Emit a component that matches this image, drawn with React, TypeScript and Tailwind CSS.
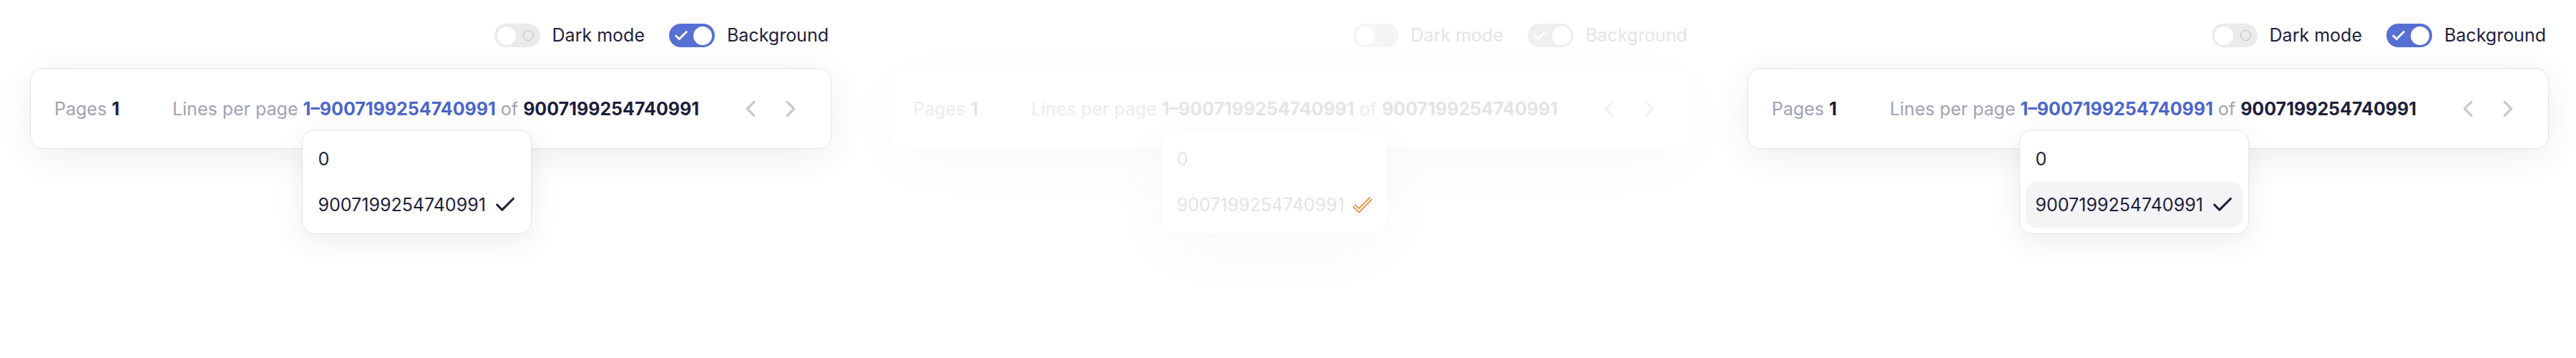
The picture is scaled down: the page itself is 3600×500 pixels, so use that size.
import { Check, ChevronLeft, ChevronRight } from "lucide-react";

type Variant = "plain" | "ghost" | "hover";

function Toggle({ on, ghost }: { on: boolean; ghost: boolean }) {
  const track = on
    ? ghost
      ? "bg-[#efefef] justify-between"
      : "bg-[#5670d4] justify-between"
    : ghost
      ? "bg-[#f5f5f5] justify-between"
      : "bg-[#ebebeb] justify-between";

  return (
    <span className={`flex h-[33px] w-[64px] items-center rounded-full px-[4px] ${track}`}>
      {on ? (
        <>
          <Check size={22} strokeWidth={3.2} className="ml-[2px] text-white" />
          <span className="h-[26px] w-[26px] rounded-full bg-white" />
        </>
      ) : (
        <>
          <span className="h-[26px] w-[26px] rounded-full bg-white" />
          <span
            className={`mr-[5px] h-[15px] w-[15px] rounded-full border-[1.5px] ${
              ghost ? "border-[#eeeeee]" : "border-[#b8b8b8]"
            }`}
          />
        </>
      )}
    </span>
  );
}

function GhostCheck() {
  return (
    <svg width="30" height="24" viewBox="0 0 30 24" fill="none" aria-hidden>
      <path d="M3 13l7 7L27 3" stroke="#e11d1d" strokeWidth="5" strokeLinejoin="miter" />
      <path d="M3 13l7 7L27 3" stroke="#f7e01a" strokeWidth="3.6" strokeLinejoin="miter" />
      <path d="M3 13l7 7L27 3" stroke="#eeeeee" strokeWidth="2" strokeLinejoin="miter" />
    </svg>
  );
}

function Panel({ variant }: { variant: Variant }) {
  const ghost = variant === "ghost";
  const dark = ghost ? "text-[#e4e4e4]" : "text-[#1d1e3b]";
  const muted = ghost ? "text-[#ececec]" : "text-[#a1a1b3]";
  const blue = ghost ? "text-[#e6e6e6]" : "text-[#4b66c9]";
  const chevron = ghost ? "text-[#f2f2f2]" : "text-[#c9c9d3]";

  return (
    <div className="flex w-[1200px] shrink-0 flex-col pl-[42px] pt-[33px]">
      <div className="flex w-[1120px] items-center justify-end gap-[34px] pr-[4px] text-[25px] leading-[33px]">
        <label className="flex items-center gap-[17px]">
          <Toggle on={false} ghost={ghost} />
          <span className={dark}>Dark mode</span>
        </label>
        <label className="flex items-center gap-[17px]">
          <Toggle on ghost={ghost} />
          <span className={dark}>Background</span>
        </label>
      </div>

      <div
        className={`mt-[29px] flex h-[113px] w-[1120px] items-center rounded-[18px] border bg-white pl-[33px] pr-[37px] text-[25px] leading-[30px] ${
          ghost
            ? "border-[#fafafa] shadow-[0_20px_90px_rgba(0,0,0,0.025)]"
            : "border-[#e4e4e4] shadow-[0_10px_50px_rgba(0,0,0,0.07)]"
        }`}
      >
        <p className={muted}>
          Pages <span className={`font-bold ${dark}`}>1</span>
        </p>
        <p className={`ml-[74px] ${muted}`}>
          Lines per page{" "}
          <span className="relative">
            <span className={`font-bold ${blue}`}>1–9007199254740991</span>
            <div
              className={`absolute left-[-2px] top-full z-10 mt-[14px] rounded-[18px] border bg-white p-2 ${
                ghost
                  ? "border-[#fafafa] shadow-[0_20px_90px_rgba(0,0,0,0.03)]"
                  : "border-[#e4e4e4] shadow-[0_10px_40px_rgba(0,0,0,0.08)]"
              }`}
            >
              <div className={`flex h-16 items-center rounded-[14px] px-[14px] font-normal ${dark}`}>0</div>
              <div
                className={`flex h-16 items-center gap-[10px] whitespace-nowrap rounded-[14px] pl-[14px] pr-[11px] font-normal ${dark} ${
                  variant === "hover" ? "bg-[#f4f4f6]" : ""
                }`}
              >
                <span>9007199254740991</span>
                {ghost ? (
                  <GhostCheck />
                ) : (
                  <Check size={34} strokeWidth={2.2} className="text-[#1d1e3b]" />
                )}
              </div>
            </div>
          </span>{" "}
          of <span className={`font-bold ${dark}`}>9007199254740991</span>
        </p>
        <div className={`ml-auto flex items-center gap-[18px] ${chevron}`}>
          <ChevronLeft size={38} strokeWidth={2.1} />
          <ChevronRight size={38} strokeWidth={2.1} />
        </div>
      </div>
    </div>
  );
}

export default function App() {
  return (
    <div className="flex h-[500px] w-[3600px] bg-white font-['Inter','Noto_Sans',sans-serif]">
      <Panel variant="plain" />
      <Panel variant="ghost" />
      <Panel variant="hover" />
    </div>
  );
}
